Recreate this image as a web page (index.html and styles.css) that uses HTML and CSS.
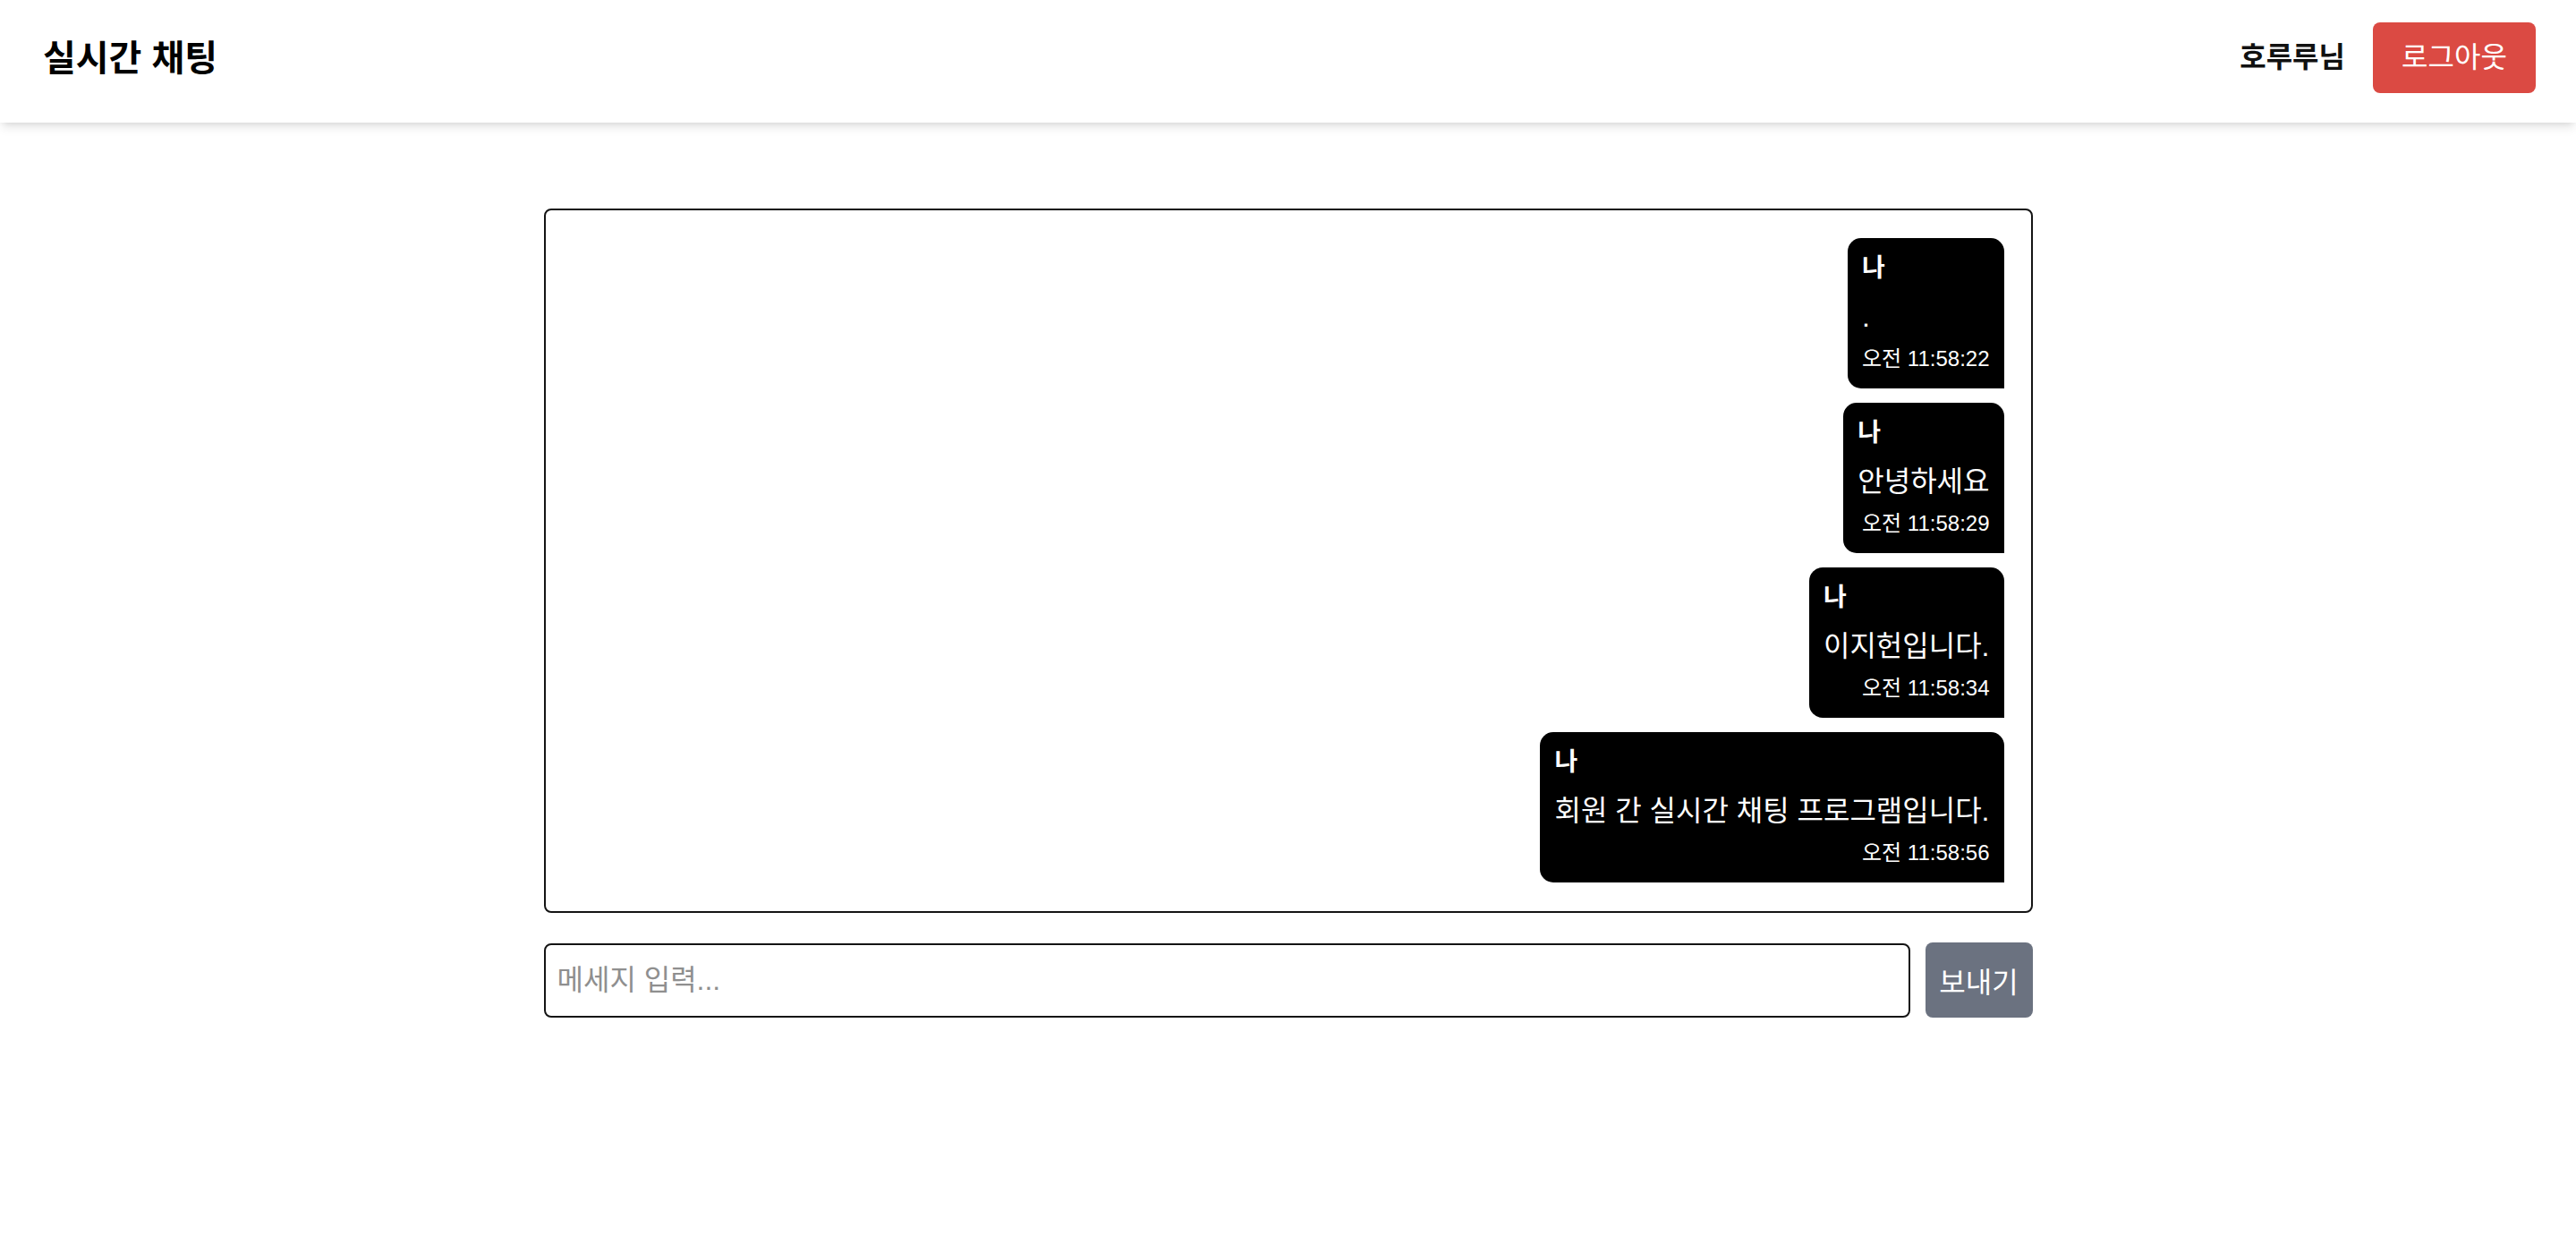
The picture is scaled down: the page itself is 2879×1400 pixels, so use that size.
FILE: index.html
```html
<!DOCTYPE html>
<html lang="ko">
<head>
<meta charset="utf-8">
<title>실시간 채팅</title>
<link rel="stylesheet" href="styles.css">
</head>
<body>
<header class="topbar">
  <h1 class="brand">실시간 채팅</h1>
  <div class="user-area">
    <span class="user-name">호루루님</span>
    <button class="logout-btn" type="button">로그아웃</button>
  </div>
</header>
<main class="chat-page">
  <section class="chat-box">
    <div class="bubble">
      <div class="bubble-sender">나</div>
      <div class="bubble-text">.</div>
      <div class="bubble-time">오전 11:58:22</div>
    </div>
    <div class="bubble">
      <div class="bubble-sender">나</div>
      <div class="bubble-text">안녕하세요</div>
      <div class="bubble-time">오전 11:58:29</div>
    </div>
    <div class="bubble">
      <div class="bubble-sender">나</div>
      <div class="bubble-text">이지헌입니다.</div>
      <div class="bubble-time">오전 11:58:34</div>
    </div>
    <div class="bubble">
      <div class="bubble-sender">나</div>
      <div class="bubble-text">회원 간 실시간 채팅 프로그램입니다.</div>
      <div class="bubble-time">오전 11:58:56</div>
    </div>
  </section>
  <form class="composer">
    <input class="composer-input" type="text" placeholder="메세지 입력...">
    <button class="send-btn" type="button">보내기</button>
  </form>
</main>
</body>
</html>
```
FILE: styles.css
```css
* { box-sizing: border-box; }
html, body { margin: 0; padding: 0; background: #fff; }
body {
  font-family: "Liberation Sans", "Noto Sans CJK KR", sans-serif;
  color: #000;
}
.topbar {
  height: 137px;
  padding: 0 45px 8px 45px;
  display: flex;
  align-items: center;
  justify-content: space-between;
  background: #fff;
  box-shadow: 0 7px 11px -2px rgba(0,0,0,0.1), 0 4px 7px -4px rgba(0,0,0,0.1);
  position: relative;
}
.brand {
  margin: 0;
  font-size: 40px;
  line-height: 52px;
  font-weight: 700;
  padding-left: 3px;
}
.user-area {
  display: flex;
  align-items: center;
  gap: 31px;
}
.user-name {
  font-size: 32px;
  font-weight: 700;
  line-height: 45px;
  color: #111;
}
.logout-btn {
  font-family: inherit;
  font-size: 32px;
  line-height: 45px;
  color: #fff;
  background: #db4a43;
  border: none;
  border-radius: 8px;
  padding: 0;
  height: 79px;
  width: 182px;
}
.chat-page {
  width: 1664px;
  margin: 96px auto 0;
}
.chat-box {
  height: 787px;
  border: 2px solid #141414;
  border-radius: 8px;
  padding: 31px 30px 30px;
  display: flex;
  flex-direction: column;
  align-items: flex-end;
  gap: 16px;
  overflow-y: auto;
}
.bubble {
  background: #000;
  color: #fff;
  border-radius: 15px 15px 0 15px;
  padding: 15px 16px 18px 16px;
  max-width: 70%;
}
.bubble-sender {
  font-size: 28px;
  line-height: 37px;
  font-weight: 700;
  margin-bottom: 14px;
}
.bubble-text {
  font-size: 32px;
  line-height: 45px;
}
.bubble-time {
  font-size: 24px;
  line-height: 30px;
  margin-top: 9px;
  text-align: right;
}
.composer {
  display: flex;
  gap: 17px;
  margin: 34px 0 0;
}
.composer-input {
  flex: 1;
  height: 83px;
  border: 2px solid #141414;
  border-radius: 8px;
  padding: 0 13px;
  font-family: inherit;
  font-size: 32px;
  color: #111;
  outline: none;
}
.composer-input::placeholder { color: #8f8f8f; }
.send-btn {
  width: 120px;
  height: 84px;
  margin-top: -1px;
  border: none;
  border-radius: 8px;
  background: #6b7280;
  color: #fff;
  font-family: inherit;
  font-size: 32px;
  padding: 0;
}
```
